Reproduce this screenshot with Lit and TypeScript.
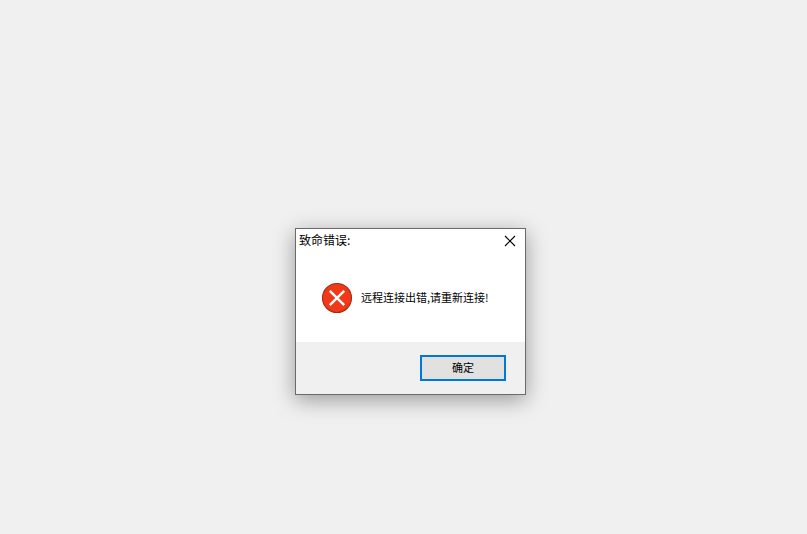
import { LitElement, html, css } from "lit";
import { customElement, property } from "lit/decorators.js";

@customElement("message-dialog")
export class MessageDialog extends LitElement {
  @property() heading = "";
  @property() message = "";

  static styles = css`
    :host {
      display: block;
      box-sizing: border-box;
      border: 1px solid #6a6a6a;
      background: #fff;
      color: #000;
      box-shadow: 0 5px 20px rgba(0, 0, 0, 0.36);
      font-family: "Noto Sans CJK SC", sans-serif;
    }
    .titlebar {
      display: flex;
      align-items: flex-start;
      justify-content: space-between;
      height: 24px;
      padding-left: 3px;
    }
    .title {
      margin: 0;
      font-size: 12px;
      font-weight: 400;
      line-height: 22px;
    }
    .close {
      display: grid;
      place-items: center;
      width: 30px;
      height: 24px;
      padding: 0;
      border: 0;
      background: none;
    }
    .close svg,
    .icon {
      display: block;
    }
    .content {
      display: flex;
      align-items: center;
      gap: 8px;
      padding: 29px 26px 28px 25px;
    }
    .icon {
      flex: none;
    }
    .message {
      margin: 0;
      padding-bottom: 2px;
      font-size: 11px;
      line-height: 16px;
      white-space: nowrap;
    }
    .footer {
      display: flex;
      justify-content: flex-end;
      padding: 13px 19px;
      background: #f0f0f0;
    }
    .ok {
      box-sizing: border-box;
      width: 86px;
      height: 26px;
      padding: 0 0 2px;
      border: 2px solid #0078d7;
      background: #e1e1e1;
      color: #000;
      font-family: inherit;
      font-size: 11px;
      line-height: 20px;
    }
  `;

  render() {
    return html`
      <section role="alertdialog" aria-labelledby="title" aria-describedby="message">
        <header class="titlebar">
          <h1 class="title" id="title">${this.heading}</h1>
          <button class="close" aria-label="关闭">
            <svg width="12" height="12" viewBox="0 0 12 12" aria-hidden="true">
              <path d="M1 1L11 11M11 1L1 11" stroke="#000" stroke-width="1.1" fill="none" />
            </svg>
          </button>
        </header>
        <div class="content">
          <svg class="icon" width="32" height="32" viewBox="0 0 32 32" aria-hidden="true">
            <circle cx="16" cy="16" r="14.5" fill="#f03a17" stroke="#a92b17" stroke-width="1.1" />
            <path d="M8.8 8.8L23.2 23.2M23.2 8.8L8.8 23.2" stroke="#fff" stroke-width="2.4" fill="none" />
          </svg>
          <p class="message" id="message">${this.message}</p>
        </div>
        <footer class="footer">
          <button class="ok">确定</button>
        </footer>
      </section>
    `;
  }
}

@customElement("app-root")
export class AppRoot extends LitElement {
  static styles = css`
    :host {
      display: block;
      position: relative;
      min-height: 100vh;
      overflow: hidden;
      background: #f0f0f0;
    }
    /* A free-floating window on the desktop. */
    .window {
      position: absolute;
      left: 295px;
      top: 228px;
      width: 231px;
    }
  `;

  render() {
    return html`
      <message-dialog
        class="window"
        heading="致命错误:"
        message="远程连接出错,请重新连接!"
      ></message-dialog>
    `;
  }
}
